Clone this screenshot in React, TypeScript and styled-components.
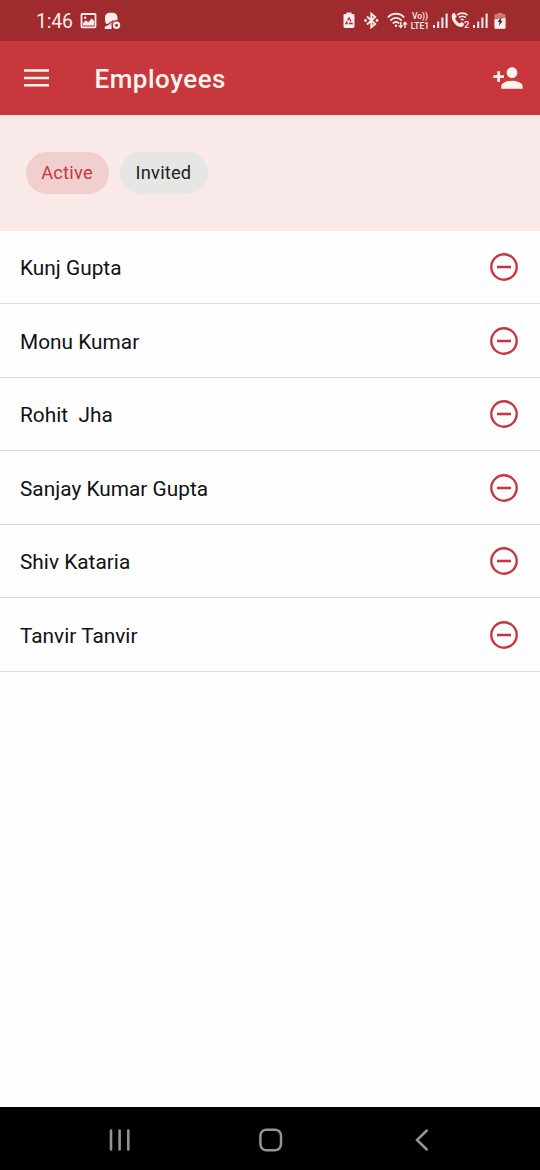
import React from "react";
import styled, { createGlobalStyle } from "styled-components";

const GlobalStyle = createGlobalStyle`
  *, *::before, *::after { box-sizing: border-box; }
  body { margin: 0; background: #fff; font-family: Roboto, "Noto Sans", sans-serif; }
`;

const Screen = styled.div`
  width: 540px;
  height: 1170px;
  display: flex;
  flex-direction: column;
  overflow: hidden;
  background: #fefefe;
`;

const StatusBar = styled.div`
  height: 41px;
  flex: none;
  display: flex;
  align-items: center;
  justify-content: space-between;
  padding: 0 34px 0 36px;
  background: #a02b2e;
  color: #fdeceb;
`;

const StatusGroup = styled.div`
  display: flex;
  align-items: center;
  svg { display: block; flex: none; }
`;

const Clock = styled.span`
  width: 44px;
  font-size: 19.5px;
  line-height: 24px;
  letter-spacing: -0.2px;
  padding-top: 2px;
  white-space: nowrap;
`;

const Spacer = styled.span<{ $w: number }>`
  width: ${(p) => p.$w}px;
  flex: none;
`;

const Network = styled.div`
  width: 20px;
  display: flex;
  flex-direction: column;
  align-items: center;
  font-size: 8.5px;
  font-weight: 500;
  line-height: 10px;
  white-space: nowrap;
`;

const AppBar = styled.header`
  height: 74px;
  flex: none;
  display: flex;
  align-items: center;
  padding: 0 16px 0 24px;
  background: #c8373b;
  color: #fff3f0;
`;

const IconButton = styled.button`
  display: flex;
  padding: 0;
  border: 0;
  background: none;
  color: inherit;
  svg { display: block; }
`;

const Title = styled.h1`
  flex: 1;
  margin: 2px 0 0 45.5px;
  font-size: 26px;
  line-height: 32px;
  font-weight: 500;
  letter-spacing: 0.5px;
`;

const Filters = styled.div`
  height: 115.5px;
  flex: none;
  display: flex;
  align-items: flex-start;
  gap: 11px;
  padding: 37px 26px 0;
  background: linear-gradient(#f3dfde, #f9eae9 4px);
`;

const Chip = styled.button<{ $active?: boolean; $w: number }>`
  width: ${(p) => p.$w}px;
  height: 42px;
  padding: 0 1px 0 0;
  border: 0;
  border-radius: 21px;
  background: ${(p) => (p.$active ? "#f1cfcf" : "#e6e6e5")};
  color: ${(p) => (p.$active ? "#c8373f" : "#222")};
  font-family: inherit;
  font-size: 18.3px;
  line-height: 42px;
  letter-spacing: 0.2px;
`;

const List = styled.ul`
  flex: 1;
  margin: 0;
  padding: 0;
  list-style: none;
`;

const Row = styled.li`
  height: 73.5px;
  display: flex;
  align-items: center;
  justify-content: space-between;
  padding: 0 19px 0 20px;
  border-bottom: 1.5px solid #dcdcdc;
  color: #111;
`;

const Name = styled.span`
  padding-top: 2.5px;
  font-size: 20.8px;
  line-height: 26px;
  letter-spacing: 0.02px;
  white-space: pre;
`;

const RemoveButton = styled(IconButton)`
  padding-top: 0.5px;
  color: #c9353f;
`;

const NavBar = styled.nav`
  height: 63px;
  flex: none;
  display: flex;
  align-items: center;
  justify-content: space-between;
  padding: 3px 106px 0 108px;
  background: #000;
  color: #949494;
`;

const Signal = () => (
  <svg width="15" height="17" viewBox="0 0 15 17" fill="currentColor">
    <rect x="0" y="13" width="2" height="3" />
    <rect x="4.200" y="9.500" width="2" height="6.500" />
    <rect x="8.400" y="5.500" width="2" height="10.500" />
    <rect x="12.600" y="1.500" width="2" height="14.500" />
  </svg>
);

const PictureIcon = () => (
  <svg width="17" height="16" viewBox="0 0 17 16">
    <rect x="1.500" y="1" width="14" height="13.400" rx="0.800" fill="none" stroke="currentColor" strokeWidth="1.800" />
    <path d="M3 12.400V10l3-2.800 2.300 2 3.400-3.800 2.400 2.700v4.300z" fill="currentColor" />
    <circle cx="5.200" cy="4.800" r="1.200" fill="currentColor" />
  </svg>
);

const ProfileIcon = () => (
  <svg width="17" height="18" viewBox="0 0 17 18">
    <path d="M1 5.500C1 2.300 3 .7 6.200.7h2.500c3.200 0 4.800 2 4.800 5.100v2.300c-2 0-3.300.6-4.500 2L7 12H2.500C1.200 10.600.8 8.500 1 5.500z" fill="currentColor" />
    <path d="M.8 17v-2.300l4-2.500h2.700l.1 4.800z" fill="currentColor" />
    <path d="M2 13.800 9.500 8.400" stroke="#a02b2e" strokeWidth="1.200" />
    <circle cx="12.500" cy="13.300" r="4.600" fill="#a02b2e" />
    <circle cx="12.500" cy="13.300" r="2.600" fill="none" stroke="currentColor" strokeWidth="2.200" />
  </svg>
);

const RecycleBattery = () => (
  <svg width="12" height="17" viewBox="0 0 12 17">
    <path d="M3.500 2V.5h5V2h1.600c.9 0 1.400.6 1.400 1.400v11.200c0 .9-.6 1.400-1.400 1.400H1.900C1 16 .5 15.500.5 14.600V3.400C.5 2.500 1 2 1.900 2z" fill="currentColor" />
    <path d="M6 5.800 9 11.500H3z" fill="none" stroke="#a02b2e" strokeWidth="1.300" strokeDasharray="4.200 1.200" />
  </svg>
);

const BluetoothIcon = () => (
  <svg width="15" height="17" viewBox="0 0 15 17">
    <path d="M3 4.500 11.200 12 7.300 15.300V1.700L11.200 5 3 12.500" fill="none" stroke="currentColor" strokeWidth="1.900" />
    <circle cx="1.500" cy="8.500" r="1.400" fill="currentColor" />
    <circle cx="13" cy="8.500" r="1.400" fill="currentColor" />
  </svg>
);

const WifiIcon = () => (
  <svg width="21" height="17" viewBox="0 0 21 17" fill="none" stroke="currentColor" strokeWidth="1.800">
    <path d="M.8 5.500C5 .5 13 .5 17.200 5.500M3.300 8.600c3.200-3.700 8.200-3.700 11.400 0M5.800 11.500c1.800-2 4.600-2 6.400 0" />
    <circle cx="9" cy="13.700" r="1.200" fill="currentColor" stroke="none" />
    <path d="M13.800 10v5.500M11.900 13.400l1.900 2.100 1.800-2.100M18 16v-5.500M16.200 12.500 18 10.400l1.900 2.100" strokeWidth="1.400" />
  </svg>
);

const WifiCallIcon = () => (
  <svg width="20" height="18" viewBox="0 0 20 18">
    <path d="M1.200 1.800 3.500.8l2.200 4-1.600 1.700c.8 2.200 2.400 3.800 4.600 4.900l1.800-1.500 2.400 1.600c.2 2-.9 3.300-3 3.400C4.500 14.700-.8 7.500 1.200 1.800z" fill="currentColor" />
    <path d="M6 3.200c3-2.800 7.800-2.800 10.600 0M7.900 5.700c2-1.900 4.900-1.900 6.900 0M9.800 8c1-.8 2-.8 3 0" fill="none" stroke="currentColor" strokeWidth="1.600" />
    <text x="13" y="16.300" fontFamily="Roboto" fontSize="9.500" fontWeight="500" fill="currentColor">2</text>
  </svg>
);

const ChargingBattery = () => (
  <svg width="12" height="18" viewBox="0 0 12 18">
    <path d="M3.800 2V.8h4.400V2H10c.9 0 1.500.5 1.500 1.400v12c0 .9-.6 1.400-1.500 1.400H2c-.9 0-1.500-.5-1.500-1.400v-12C.5 2.500 1.100 2 2 2z" fill="#c97b79" />
    <path d="M.5 7.500 11.500 6v9.400c0 .9-.6 1.400-1.500 1.400H2c-.9 0-1.500-.5-1.500-1.400z" fill="currentColor" />
    <path d="M7.600 4.800 3.600 10h2.100l-1 4.200 3.900-5.400H6.600z" fill="#4b2023" />
  </svg>
);

const MenuIcon = () => (
  <svg width="25" height="20" viewBox="0 0 25 20" fill="currentColor">
    <path d="M0 1.200h25v2.600H0zM0 8.700h25v2.600H0zM0 16h25v2.600H0z" />
  </svg>
);

const PersonAddIcon = () => (
  <svg width="32" height="32" viewBox="0 0 24 24" fill="currentColor">
    <path d="M15 12c2.210 0 4-1.790 4-4s-1.790-4-4-4-4 1.790-4 4 1.790 4 4 4zm-9-2V7H4v3H1v2h3v3h2v-3h3v-2H6zm9 4c-2.670 0-8 1.340-8 4v2h16v-2c0-2.660-5.330-4-8-4z" />
  </svg>
);

const RemoveIcon = () => (
  <svg width="34" height="34" viewBox="0 0 34 34" fill="none" stroke="currentColor" strokeWidth="2.400">
    <circle cx="17" cy="17" r="12.700" />
    <path d="M10 17h14" strokeWidth="2.600" />
  </svg>
);

const RecentsIcon = () => (
  <svg width="24" height="24" viewBox="0 0 24 24" stroke="currentColor" strokeWidth="2.600" strokeLinecap="round">
    <path d="M3 2.500v19M11.600 2.500v19M20.300 2.500v19" />
  </svg>
);

const HomeIcon = () => (
  <svg width="24" height="24" viewBox="0 0 24 24" fill="none" stroke="currentColor" strokeWidth="2.500">
    <rect x="1.400" y="1.700" width="20.600" height="20.600" rx="6" />
  </svg>
);

const BackIcon = () => (
  <svg width="24" height="24" viewBox="0 0 24 24" fill="none" stroke="currentColor" strokeWidth="2.500" strokeLinecap="round">
    <path d="M16.800 2.500 7 12l9.800 9.500" />
  </svg>
);

const employees = [
  "Kunj Gupta",
  "Monu Kumar",
  "Rohit  Jha",
  "Sanjay Kumar Gupta",
  "Shiv Kataria",
  "Tanvir Tanvir",
];

export default function App() {
  return (
    <Screen>
      <GlobalStyle />
      <StatusBar>
        <StatusGroup>
          <Clock>1:46</Clock>
          <PictureIcon />
          <Spacer $w={7} />
          <ProfileIcon />
        </StatusGroup>
        <StatusGroup>
          <RecycleBattery />
          <Spacer $w={9} />
          <BluetoothIcon />
          <Spacer $w={8} />
          <WifiIcon />
          <Spacer $w={2} />
          <Network>
            <span>Vo))</span>
            <span>LTE1</span>
          </Network>
          <Spacer $w={3} />
          <Signal />
          <Spacer $w={3} />
          <WifiCallIcon />
          <Spacer $w={2} />
          <Signal />
          <Spacer $w={6} />
          <ChargingBattery />
        </StatusGroup>
      </StatusBar>
      <AppBar>
        <IconButton aria-label="Menu"><MenuIcon /></IconButton>
        <Title>Employees</Title>
        <IconButton aria-label="Add employee"><PersonAddIcon /></IconButton>
      </AppBar>
      <Filters>
        <Chip $active $w={83}>Active</Chip>
        <Chip $w={88}>Invited</Chip>
      </Filters>
      <List>
        {employees.map((name) => (
          <Row key={name}>
            <Name>{name}</Name>
            <RemoveButton aria-label={`Remove ${name}`}><RemoveIcon /></RemoveButton>
          </Row>
        ))}
      </List>
      <NavBar>
        <IconButton aria-label="Recents"><RecentsIcon /></IconButton>
        <IconButton aria-label="Home"><HomeIcon /></IconButton>
        <IconButton aria-label="Back"><BackIcon /></IconButton>
      </NavBar>
    </Screen>
  );
}
